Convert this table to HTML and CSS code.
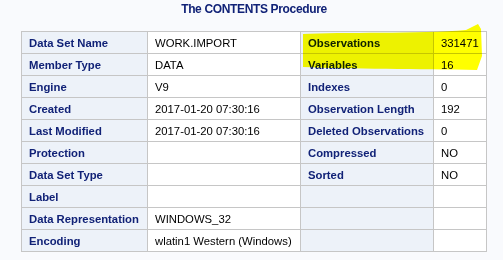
FILE: index.html
```html
<!DOCTYPE html>
<html>
<head>
<meta charset="utf-8">
<link rel="stylesheet" href="styles.css">
</head>
<body>
<div class="page">
  <div class="title">The CONTENTS Procedure</div>
  <table class="contents">
    <colgroup>
      <col class="c1"><col class="c2"><col class="c3"><col class="c4">
    </colgroup>
    <tr><th>Data Set Name</th><td>WORK.IMPORT</td><th>Observations</th><td>331471</td></tr>
    <tr><th>Member Type</th><td>DATA</td><th>Variables</th><td>16</td></tr>
    <tr><th>Engine</th><td>V9</td><th>Indexes</th><td>0</td></tr>
    <tr><th>Created</th><td>2017-01-20 07:30:16</td><th>Observation Length</th><td>192</td></tr>
    <tr><th>Last Modified</th><td>2017-01-20 07:30:16</td><th>Deleted Observations</th><td>0</td></tr>
    <tr><th>Protection</th><td></td><th>Compressed</th><td>NO</td></tr>
    <tr><th>Data Set Type</th><td></td><th>Sorted</th><td>NO</td></tr>
    <tr><th>Label</th><td></td><th></th><td></td></tr>
    <tr><th>Data Representation</th><td>WINDOWS_32</td><th></th><td></td></tr>
    <tr><th>Encoding</th><td>wlatin1 Western (Windows)</td><th></th><td></td></tr>
  </table>
  <svg class="highlight" width="503" height="260" viewBox="0 0 503 260">
    <path d="M303,34 C340,32 420,34 466,30 L478,24 L481,29 L482,56 L477,70 C420,69 350,69 303,67 Z" fill="#ffff00"/>
  </svg>
</div>
</body>
</html>
```

FILE: styles.css
```css
html, body {
  margin: 0;
  padding: 0;
  background: #f9fafd;
}
.page {
  position: relative;
  width: 503px;
  height: 260px;
  overflow: hidden;
  font-family: "Liberation Sans", Arial, sans-serif;
}
.title {
  padding-top: 2px;
  height: 15px;
  line-height: 15px;
  text-align: center;
  font-size: 12px;
  letter-spacing: -0.35px;
  font-weight: bold;
  color: #112277;
  padding-left: 5px;
}
.contents {
  margin: 14px 0 0 21px;
  border-collapse: collapse;
  table-layout: fixed;
  width: 465px;
  border: 1px solid #b4b4b4;
  font-size: 11.3px;
}
.c1 { width: 126px; }
.c2 { width: 153px; }
.c3 { width: 133px; }
.c4 { width: 53px; }
.contents th, .contents td {
  height: 21px;
  padding: 0 0 0 7px;
  border: 1px solid #c6c6c6;
  text-align: left;
  white-space: nowrap;
  overflow: hidden;
}
.contents th {
  background: #edf2f9;
  color: #112277;
  font-weight: bold;
}
.contents td {
  background: #ffffff;
  color: #000000;
}
.highlight {
  position: absolute;
  left: 0;
  top: 0;
  mix-blend-mode: multiply;
  pointer-events: none;
}
```
